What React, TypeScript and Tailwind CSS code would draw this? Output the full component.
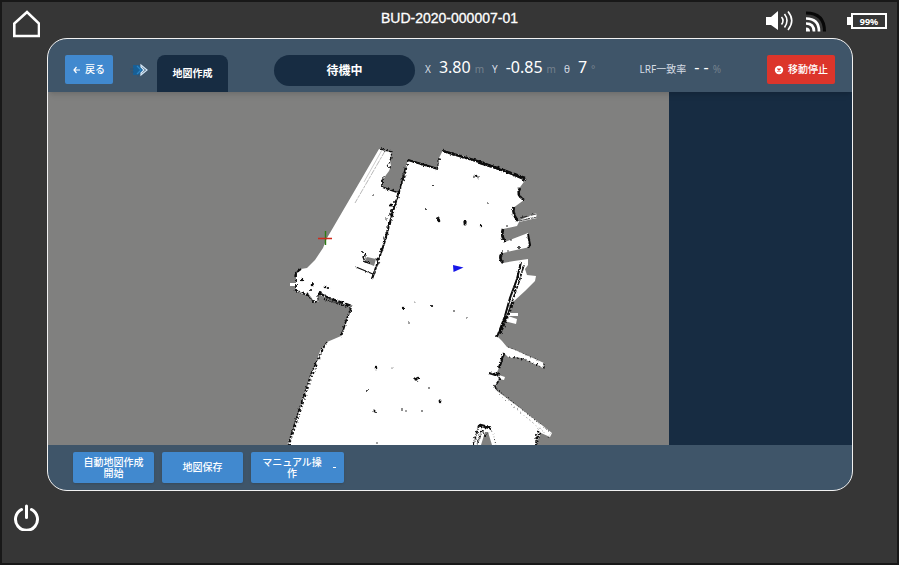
import React, { useState } from "react";

const WHITE_AREA =
  "M379 149L386 151L392 152L390 161L391 166L389 171L386 175L383 180L382 187L390 190L399 193L404 178L406 166L408 160L438 169L438 160L443 150L463 156L485 164L505 171L526 179L518 190L519 195L524 200L513 208L514 215L518 221L536 213L537 218L519 222L517 226L503 229L502 235L505 242L515 238L528 233L530 247L516 250L503 253L500 258L503 263L514 261L528 259L528 265L525 269L527 275L536 276L535 281L525 291L513 302L510 313L518 313L518 316L508 316L517 319L516 324L504 321L498 337L502 341L507 347L515 350L544 363L543 368L524 359L517 357L511 358L508 357L504 353L498 370L496 374L505 377L504 380L499 379L496 386L497 391L520 408L552 433L550 437L541 433L535 445L492 445L488 432L485 432L481 445L287 445L294 427L300 407L306 388L313 369L321 349L327 342L341 336L346 322L351 307L336 301L322 296L318 293L319 301L315 303L311 297L307 292L306 295L295 291L296 286L290 286L290 283L296 283L296 273L301 269L307 268L315 260L323 248L327 238Z";

// rough scan edges: path, stroke width, dash pattern
const WALLS: [string, number, string?][] = [
  ["M408 160L438 169", 2],
  ["M443 151L480 162L505 171L526 180", 2.4],
  ["M480 163L500 169L525 178", 2.6, "12 2 6 1"],
  ["M381 149L392 152L390 161", 1.3, "4 1 2 1"],
  ["M390 162L387 166L391 168M385 175L382 180L383 183", 1],
  ["M382 180L382 187L399 193L406 166", 1.6, "7 .6"],
  ["M408 160L404 181", 1.4, "2 2"],
  ["M399 191L390 222L384 244L372 279", 2, "9 .5 4 .5"],
  ["M398 197L390 224L374 268", 1.6, "1 6 3 9"],
  ["M366 254L363 257L365 262L370 263", 1.4],
  ["M356 267L373 274L372 279", 1.2],
  ["M438 160L438 168M440 158L438 165", 1, "2 2"],
  ["M520 188C517 193 519 197 524 200", 2.5],
  ["M514 207C512 213 515 217 518 221", 2.5],
  ["M519 221L537 217M520 218L536 214M528 216L529 219", 0.7],
  ["M503 229C501 235 503 239 505 242", 2.7],
  ["M528 234L530 245L528 248", 1.9],
  ["M503 252C499 256 500 260 503 263", 2.6],
  ["M521 262L517 279L510 298L505 316L497 337", 2],
  ["M524 265L519 282L513 299L508 314L499 333", 1.5, "8 1 3 1"],
  ["M513 302L507 318", 2.9, "2 2"],
  ["M507 316L500 334", 2.6, "3 1"],
  ["M504 353L501 362L499 368", 2.4, "8 1"],
  ["M489 373L495 375L500 373", 2.1],
  ["M496 373L500 379L495 386L497 391", 1.6, "4 1"],
  ["M509 357L524 359L544 368L544 363", 1.1, "2 2"],
  ["M508 347L518 351L540 361", 0.6, "1 3"],
  ["M499 391L551 433L548 438", 1, "1 2"],
  ["M499 394L545 433", 0.6, "1 3"],
  ["M540 433L537 438L536 445", 2.2, "3 1"],
  ["M539 431L535 436L538 442", 1.4, "2 2"],
  ["M295 290L307 295M296 272L295 278M301 269L297 272", 1.8, "5 1"],
  ["M296 274L296 290", 1.8, "3 2"],
  ["M319 293L329 298L352 306", 2.2, "6 1"],
  ["M324 299L350 307", 2.2, "1 1"],
  ["M307 294L314 303L318 301L318 295", 1.3, "3 1"],
  ["M351 308L346 321L341 337", 1.7, "5 1"],
  ["M327 342L320 354L311 374L305 393L298 413L288 445", 1.4, "4 1 2 1"],
  ["M324 346L309 384L300 412L289 445", 1.8, "1 3 2 2"],
  ["M479 425L491 428", 3],
  ["M479 425L473 445M482 430L477 445", 1.8, "3 1 1 1"],
  ["M490 428L493 434L496 445", 0.8, "1 2"],
  ["M483 432L485 437L489 432", 0.8],
];

const SPECKS: [number, number, number][] = [
  [373, 195, 0.8], [433, 185, 1], [426, 209, 0.9], [438, 219, 2], [439, 221, 1.3],
  [465, 222, 1.7], [465, 224, 1.5], [481, 226, 1.2], [488, 203, 0.8], [476, 176, 1.3],
  [391, 205, 1.5], [392, 211, 2], [391, 214, 1.8], [394, 202, 0.9], [386, 219, 0.7],
  [387, 227, 0.8], [362, 252, 1], [403, 308, 1.2], [415, 302, 0.6], [432, 306, 1.1],
  [409, 323, 0.7], [454, 311, 0.8], [467, 318, 0.7], [376, 368, 1.3], [367, 391, 0.9],
  [392, 368, 0.5], [416, 379, 1.7], [418, 378, 1.2], [429, 388, 0.8], [440, 401, 1.4],
  [440, 402, 1.2], [374, 411, 1.5], [376, 412, 1], [402, 410, 0.8], [406, 411, 0.7],
  [422, 411, 0.8], [377, 443, 0.7], [302, 280, 1.2], [312, 285, 1.3], [313, 284, 1],
  [325, 287, 1.3], [328, 288, 1.1], [311, 290, 1], [320, 293, 1.9],
  [507, 226, 0.8], [511, 240, 0.7], [508, 251, 0.7], [519, 248, 0.9],
];

const MapView = () => (
  <svg
    viewBox="48 92 621 353"
    preserveAspectRatio="xMidYMid slice"
    className="absolute inset-0 h-full w-full"
    role="img"
    aria-label="地図"
  >
    <defs>
      <filter id="rough" x="-5%" y="-5%" width="110%" height="110%">
        <feTurbulence type="fractalNoise" baseFrequency="0.4" numOctaves="2" seed="4" />
        <feDisplacementMap in="SourceGraphic" scale="3" xChannelSelector="R" yChannelSelector="G" />
      </filter>
    </defs>
    <path d={WHITE_AREA} fill="#fff" />
    <path d="M367 257L376 259L374 266L364 262Z" fill="#80807f" />
    <path d="M385 151L355 203" stroke="#999" strokeWidth="0.7" strokeDasharray="6 1 3 1" />
    <path d="M382 150L364 182" stroke="#aaa" strokeWidth="0.6" />
    <g filter="url(#rough)" fill="none" stroke="#080808">
      {WALLS.map(([d, width, dash]) => (
        <path key={d} d={d} strokeWidth={width} strokeDasharray={dash} />
      ))}
      {SPECKS.map(([x, y, r]) => (
        <circle key={`${x}-${y}`} cx={x} cy={y} r={r} fill="#080808" stroke="none" />
      ))}
      <path d="M473 177L480 177M475 174L478 179" strokeWidth="0.8" />
    </g>
    {/* origin */}
    <path d="M325.500 231V245" stroke="#2d7d13" strokeWidth="1.400" />
    <path d="M318 238.500H332" stroke="#cf2a1c" strokeWidth="1.400" />
    {/* robot */}
    <path d="M453 265L463.500 267.500L453.500 272Z" fill="#1616e8" />
  </svg>
);

const HomeIcon = () => (
  <svg width="28" height="28" viewBox="0 0 28 28" fill="none" stroke="#fff" strokeWidth="2.600">
    <path d="M2.300 26V13.500L15 2L27 13.500V26Z" />
  </svg>
);

const PowerIcon = () => (
  <svg
    width="28"
    height="28"
    viewBox="0 0 28 28"
    fill="none"
    stroke="#fff"
    strokeWidth="3"
    strokeLinecap="round"
  >
    <path d="M9.500 6.500A11 11 0 1 0 19.500 6.500" />
    <path d="M14.500 3V14.500" />
  </svg>
);

const VolumeIcon = () => (
  <svg width="28" height="22" viewBox="0 0 28 22" fill="none" stroke="#fff" strokeWidth="1.600">
    <path d="M0 7H5L12 1V20L5 15H0Z" fill="#fff" stroke="none" />
    <path d="M15.500 7Q18.500 10.500 15.500 14.500M18.500 4Q23.500 10.500 18.500 17.500M22 1.500Q29.500 10.500 22 20" />
  </svg>
);

const WifiIcon = () => (
  <svg width="21" height="21" viewBox="0 0 21 21" fill="none">
    <path d="M0 16.500Q4 16.500 4 20.500H0Z" fill="#fff" />
    <path d="M0 12.500Q8 12.500 8 20.500M0 7.500Q13 7.500 13 20.500" stroke="#fff" strokeWidth="2.700" />
    <path d="M0 2Q18.500 2 18.500 20.500" stroke="#070707" strokeWidth="3" />
  </svg>
);

const ArrowsIcon = () => (
  <svg width="20" height="14" viewBox="0 0 20 14" fill="none">
    <path d="M4 2H10L15 7L10 12H4Z" fill="#175f96" />
    <path d="M1 6H5M2 9H5M9 11V14" stroke="#2a5478" strokeWidth="1" />
    <path d="M8 3L12 7L8 11" stroke="#2b83c4" strokeWidth="1.200" />
    <path d="M12 2V4L15 7L12 10V12L18 7Z" stroke="#d5e9fa" strokeWidth="1.200" />
  </svg>
);

const Battery = ({ level }: { level: number }) => (
  <div className="flex items-center">
    <span className="h-2 w-1 bg-white" />
    <span className="flex h-4 w-9 items-center justify-center border-2 border-white text-[9px] leading-none font-bold">
      {level}%
    </span>
  </div>
);

const Value = ({ label, value, unit }: { label: string; value: string; unit: string }) => (
  <div className="flex items-baseline">
    <span className="text-[10px] text-[#d7dde5]">{label}</span>
    <span className="ml-2 text-base text-white">{value}</span>
    <span className="ml-1 text-[10px] text-[#75818d]">{unit}</span>
  </div>
);

const actionClass =
  "flex h-[31px] items-center justify-center rounded-xs bg-[#4189cf] text-[10px] leading-[11px] font-medium text-white shadow-sm";

const App = () => {
  const [manualOpen, setManualOpen] = useState(false);

  return (
    <div className="flex min-h-screen flex-col border-2 border-[#181818] bg-[#363636] font-['Noto_Sans','Noto_Sans_CJK_JP',sans-serif] text-white">
      <header className="grid h-9 grid-cols-[1fr_auto_1fr] items-start px-[10px] pt-2">
        <button aria-label="ホーム" className="w-7">
          <HomeIcon />
        </button>
        <h1 className="font-['Liberation_Sans',sans-serif] text-sm leading-4 text-shadow-2xs [-webkit-text-stroke:0.3px_white]">
          BUD-2020-000007-01
        </h1>
        <div className="flex items-center justify-end">
          <VolumeIcon />
          <span className="ml-3">
            <WifiIcon />
          </span>
          <span className="ml-5">
            <Battery level={99} />
          </span>
        </div>
      </header>

      <main className="mr-11 ml-[45px] flex flex-1 flex-col overflow-hidden rounded-[20px] border border-[#f2f2f2] bg-[#3f5569]">
        <div className="relative z-10 flex h-[53px] items-start pt-4 pr-[17px] pl-[17px] shadow-md">
          <button className="flex h-[29px] w-12 items-center justify-center gap-1 rounded-xs bg-[#4189cf] text-[10px] font-medium">
            <svg width="8" height="8" viewBox="0 0 8 8" fill="none" stroke="#fff" strokeWidth="1.200">
              <path d="M7 4H1M3.500 1L1 4L3.500 7" />
            </svg>
            <span>戻る</span>
          </button>
          <span className="mt-2 ml-4">
            <ArrowsIcon />
          </span>
          <div className="ml-2 flex h-[37px] w-[71px] items-center justify-center rounded-t-lg bg-[#172c42] text-[10px] font-bold">
            地図作成
          </div>
          <div className="ml-[46px] flex h-[31px] w-[141px] items-center justify-center rounded-full bg-[#172c42] text-xs font-bold">
            待機中
          </div>
          <div className="ml-[10px] flex items-baseline gap-2">
            <Value label="X" value="3.80" unit="m" />
            <Value label="Y" value="-0.85" unit="m" />
            <Value label="θ" value="7" unit="°" />
          </div>
          <div className="ml-auto flex items-baseline">
            <span className="text-[10px] text-[#d7dde5]">LRF一致率</span>
            <span className="ml-2 text-base">- -</span>
            <span className="ml-1 text-[10px] text-[#75818d]">%</span>
          </div>
          <button className="ml-[46px] flex h-[29px] w-[68px] items-center justify-center gap-1 rounded-xs bg-[#dc352b] text-[10px] font-medium">
            <svg width="10" height="10" viewBox="0 0 10 10">
              <circle cx="5" cy="5" r="4.200" fill="#fff" />
              <path d="M3.500 3.500L6.500 6.500M6.500 3.500L3.500 6.500" stroke="#dc352b" strokeWidth="1.300" />
            </svg>
            <span>移動停止</span>
          </button>
        </div>

        <div className="flex flex-1">
          <div className="relative flex-1 overflow-hidden bg-[#80807f]">
            <MapView />
          </div>
          <aside className="w-[183px] bg-[#172c42]" />
        </div>

        <div className="flex h-[45px] items-start gap-2 pt-[7px] pl-[25px]">
          <button className={`${actionClass} w-[81px] px-2`}>自動地図作成開始</button>
          <button className={`${actionClass} w-[81px] px-2`}>地図保存</button>
          <button
            className={`${actionClass} w-[93px] px-2`}
            aria-expanded={manualOpen}
            onClick={() => setManualOpen(!manualOpen)}
          >
            <span className="flex-1">マニュアル操作</span>
            <span className="ml-2 h-px w-[3px] bg-white" />
          </button>
        </div>
      </main>

      <footer className="flex h-[72px] items-start px-[10px] pt-3">
        <button aria-label="電源" className="w-7">
          <PowerIcon />
        </button>
      </footer>
    </div>
  );
};

export default App;
